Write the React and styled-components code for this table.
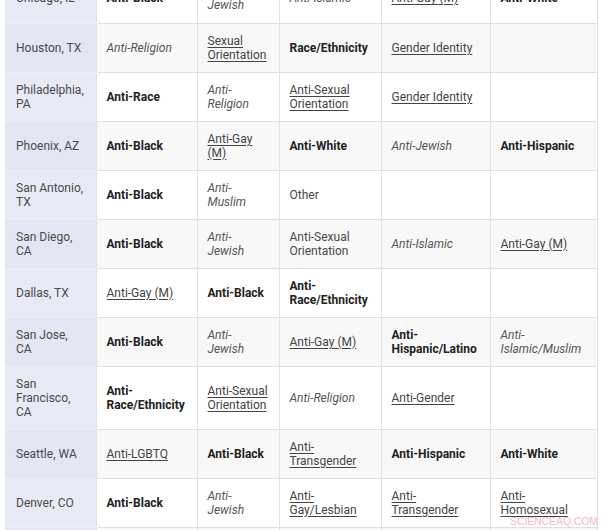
import styled, { createGlobalStyle } from 'styled-components';

const rows = [
    ['Chicago, IL', ['b', 'Anti-Black'], ['i', 'Anti-\nJewish'], ['i', 'Anti-Islamic'], ['u', 'Anti-Gay (M)'], ['b', 'Anti-White']],
    ['Houston, TX', ['i', 'Anti-Religion'], ['u', 'Sexual Orientation'], ['b', 'Race/Ethnicity'], ['u', 'Gender Identity'], null],
    ['Philadelphia, PA', ['b', 'Anti-Race'], ['i', 'Anti-Religion'], ['u', 'Anti-Sexual Orientation'], ['u', 'Gender Identity'], null],
    ['Phoenix, AZ', ['b', 'Anti-Black'], ['u', 'Anti-Gay (M)'], ['b', 'Anti-White'], ['i', 'Anti-Jewish'], ['b', 'Anti-Hispanic']],
    ['San Antonio, TX', ['b', 'Anti-Black'], ['i', 'Anti-Muslim'], ['p', 'Other'], null, null],
    ['San Diego, CA', ['b', 'Anti-Black'], ['i', 'Anti-\nJewish'], ['p', 'Anti-Sexual Orientation'], ['i', 'Anti-Islamic'], ['u', 'Anti-Gay (M)']],
    ['Dallas, TX', ['u', 'Anti-Gay (M)'], ['b', 'Anti-Black'], ['b', 'Anti-Race/Ethnicity'], null, null],
    ['San Jose,\nCA', ['b', 'Anti-Black'], ['i', 'Anti-\nJewish'], ['u', 'Anti-Gay (M)'], ['b', 'Anti-Hispanic/Latino'], ['i', 'Anti-Islamic/Muslim']],
    ['San Francisco, CA', ['b', 'Anti-Race/Ethnicity'], ['u', 'Anti-Sexual Orientation'], ['i', 'Anti-Religion'], ['u', 'Anti-Gender'], null],
    ['Seattle, WA', ['u', 'Anti-LGBTQ'], ['b', 'Anti-Black'], ['u', 'Anti-Transgender'], ['b', 'Anti-Hispanic'], ['b', 'Anti-White']],
    ['Denver, CO', ['b', 'Anti-Black'], ['i', 'Anti-\nJewish'], ['u', 'Anti-Gay/Lesbian'], ['u', 'Anti-Transgender'], ['u', 'Anti-Homosexual']],
    ['Atlanta, GA', ['b', 'Anti-Black'], null, null, null, null],
];

const widths = [91, 101, 82, 102, 109, 107];

const Entry = ({ value }) => {
    if (!value) return null;
    const [kind, text] = value;
    if (kind === 'b') return <Strong>{text}</Strong>;
    if (kind === 'i') return <Em>{text}</Em>;
    if (kind === 'u') return <Link href="#">{text}</Link>;
    return <>{text}</>;
};

const App = () => <>
    <Global />
    <Page>
        <Table>
            <colgroup>
                {widths.map((w, i) => <col key={i} style={{ width: w }} />)}
            </colgroup>
            <tbody>
                {rows.map(([city, ...cells], r) => (
                    <Row key={city} $shade={r % 2 === 1}>
                        <City $shade={r % 2 === 1}>{city}</City>
                        {cells.map((c, i) => <Cell key={i}><Entry value={c} /></Cell>)}
                    </Row>
                ))}
            </tbody>
        </Table>
        <Mark>SCIENCEAQ.COM</Mark>
    </Page>
</>

const Global = createGlobalStyle`
    html, body {
        margin: 0;
        background: #fff;
        overflow: hidden;
    }
`;

const Page = styled.div`
    position: relative;
    width: 609px;
    height: 530px;
    overflow: hidden;
    padding-left: 5px;
    box-sizing: border-box;
    font-family: Roboto, "Liberation Sans", sans-serif;
    font-size: 12px;
    line-height: 14px;
    color: #484848;
`;

const Table = styled.table`
    margin-top: -26px;
    width: 592px;
    table-layout: fixed;
    border-collapse: collapse;
    border-right: 1px solid #e0e0e0;
`;

const Row = styled.tr`
    height: 49px;
    background: ${p => p.$shade ? '#f8f8f8' : '#fff'};
`;

const Cell = styled.td`
    padding: 10px;
    border-left: 1px solid #e0e0e0;
    border-bottom: 1px solid #e0e0e0;
    vertical-align: middle;
    white-space: pre-line;
`;

const City = styled(Cell)`
    padding-left: 11px;
    border-left: none;
    border-bottom: 1px solid #eef0f8;
    background: ${p => p.$shade ? '#e4e6f4' : '#e8eaf6'};
    color: #4a4a4a;
`;

const Strong = styled.b`
    font-weight: 700;
    color: #222;
`;

const Em = styled.i`
    color: #555;
`;

const Link = styled.a`
    color: #444;
    text-decoration: underline;
    text-underline-offset: 2px;
`;

const Mark = styled.div`
    position: absolute;
    left: 510px;
    top: 515px;
    font-family: "Liberation Sans", sans-serif;
    font-size: 10.5px;
    line-height: 12px;
    color: #f4bcc6;
    letter-spacing: -0.1px;
`;

export default App
